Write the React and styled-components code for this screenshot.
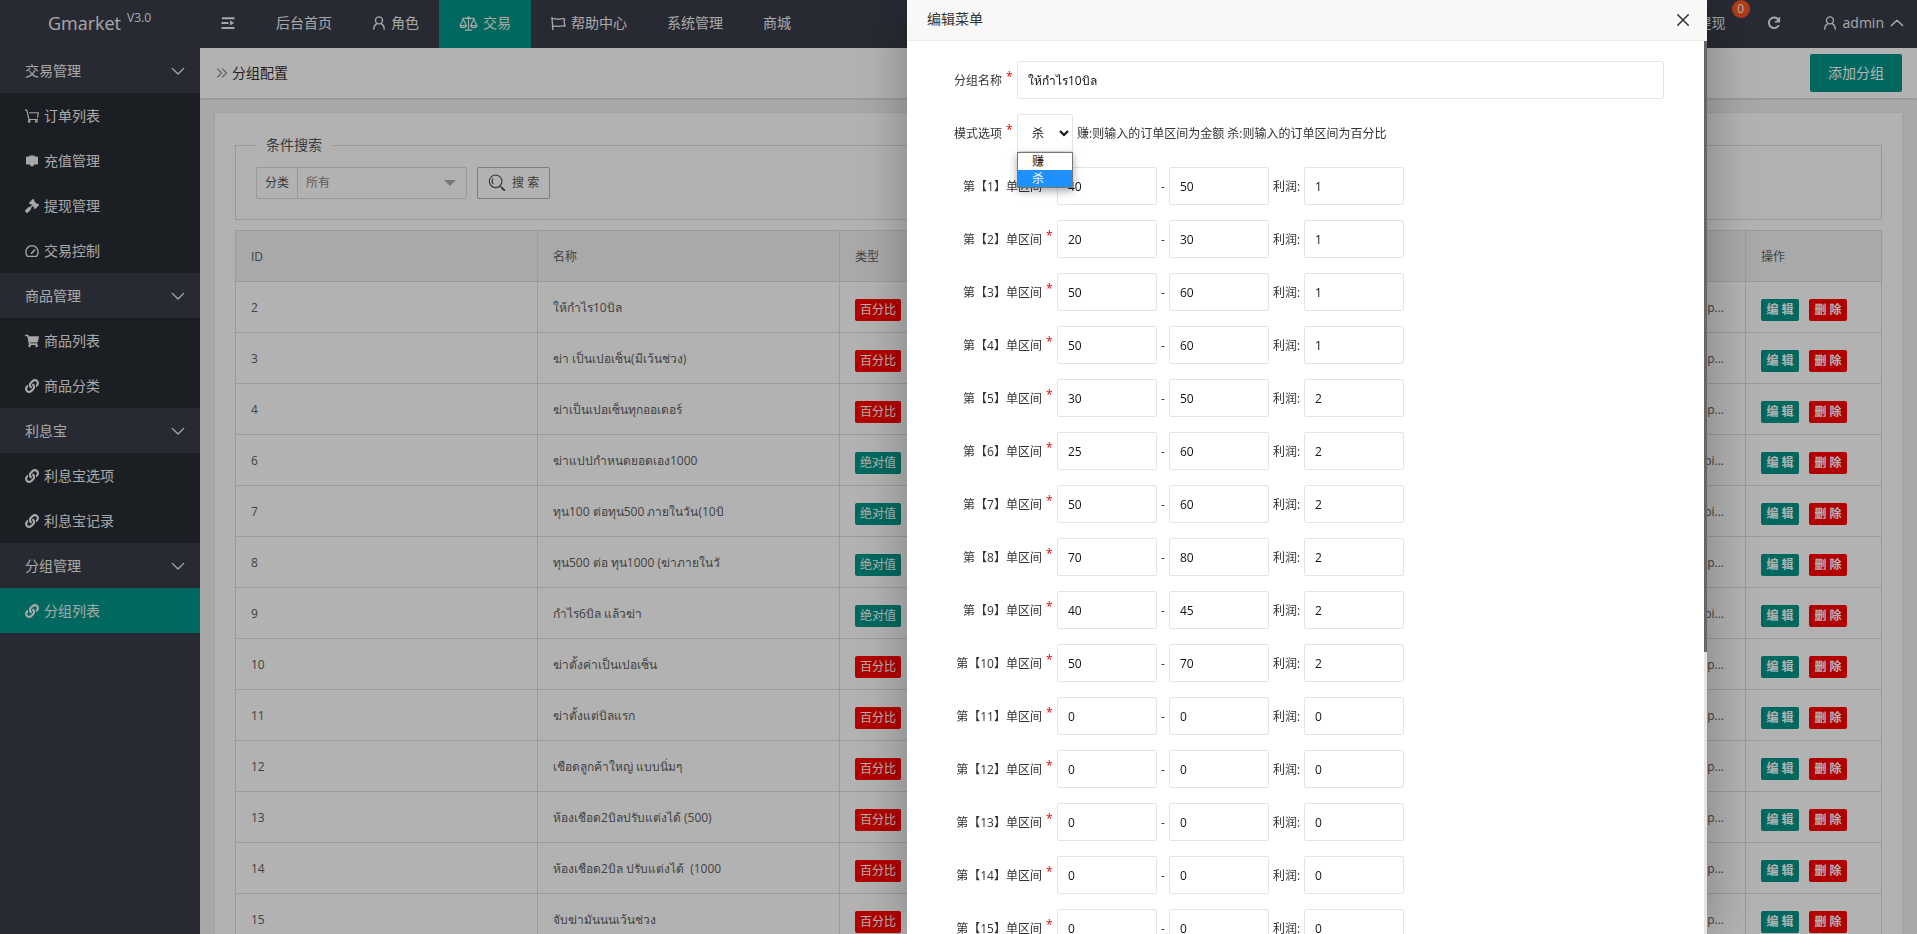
import React from 'react';
import styled, { createGlobalStyle } from 'styled-components';
import { FaGavel, FaLink, FaShoppingCart } from 'react-icons/fa';

const GlobalStyle = createGlobalStyle`
  *, *::before, *::after { box-sizing: border-box; }
  html, body, #root { height: 100%; }
  body {
    margin: 0;
    overflow: hidden;
    background: #f1f1f1;
    color: #333;
    font: 14px/24px "Open Sans", "Noto Sans", "Noto Sans CJK SC", sans-serif;
  }
  button, input, select { font: inherit; color: inherit; }
  a { color: inherit; text-decoration: none; }
  ul { list-style: none; margin: 0; padding: 0; }
  svg { display: block; flex: none; }
`;

/* ---------- icons ---------- */

const Line = ({ size = 14, width = 1.4, children, ...rest }) => (
  <svg width={size} height={size} viewBox="0 0 16 16" fill="none" stroke="currentColor"
    strokeWidth={width} strokeLinecap="round" strokeLinejoin="round" aria-hidden="true" {...rest}>
    {children}
  </svg>
);

const ShrinkIcon = () => (
  <svg width="14" height="14" viewBox="0 0 14 14" fill="currentColor" aria-hidden="true">
    <path d="M1 1.2h12.5v2H1zM.5 6h7v2h-7zM.5 11h13v2H.5zM9 4.4v5.2L13.2 7z" />
  </svg>
);
const UserIcon = () => (
  <Line width={1.6}>
    <circle cx="8" cy="5" r="4" />
    <path d="M5.6 8.600C3.400 9.800 2 12 2 15M10.400 8.600C12.600 9.800 14 12 14 15" />
  </Line>
);
const ScaleIcon = () => (
  <svg width="19" height="15" viewBox="0 0 18 14" fill="none" stroke="currentColor"
    strokeWidth="1.1" strokeLinejoin="round" strokeLinecap="round" aria-hidden="true">
    <path d="M9 .7V13M6 13.300h6M3.600 2.200h10.800M7 2.200L9 .7l2 1.500M4 3L1 9h6zM14 3l-3 6h6zM1 9c.6 2.600 5.400 2.600 6 0M11 9c.6 2.600 5.400 2.600 6 0" />
  </svg>
);
const FlagIcon = () => (
  <Line size={15} width={1.4}>
    <path d="M1 1.500l1 13M1.300 3.200c2.500-1.400 4.500.6 7 .2 2.400-.4 4-1 6.200-.4L14 6.500l1 4.200c-2.500-.8-4.500.2-6.500.4-2.500.2-4-1-6.700 0" />
  </Line>
);
const RefreshIcon = () => (
  <Line width={2.2} strokeLinecap="butt">
    <path d="M13.500 10.500a6 6 0 1 1-.8-6.600" />
    <path d="M14.500 1.500v5h-5z" fill="currentColor" stroke="none" />
    <path d="M14.200 1v5.500H9" strokeWidth="1.600" />
  </Line>
);
const ChevronIcon = ({ up }) => (
  <Line size={14} width={1.6}>
    <path d={up ? 'M1.500 11L8 4.800 14.500 11' : 'M1.500 5L8 11.500 14.500 5'} />
  </Line>
);
const CartIcon = () => (
  <Line width={1.3}>
    <path d="M.7 1L2.200 1.800 4.500 12h9.800M5.200 4.300h10.100L14.300 9.500" />
    <circle cx="4.800" cy="14.200" r="1" /><circle cx="13" cy="14.200" r="1" />
  </Line>
);
const BoardIcon = () => (
  <svg width="14" height="14" viewBox="0 0 14 14" fill="currentColor" aria-hidden="true">
    <path d="M4.500 1.500h5v1H12q1 0 1 1v6q0 1-1 1H9l-.5 1.800h-3L5 10.500H2q-1 0-1-1v-6q0-1 1-1h2.500z" />
  </svg>
);
const GaugeIcon = () => (
  <Line width={1.5}>
    <path d="M3 14.200A7 7.200 0 1 1 13 14.200z" />
    <path d="M7.500 10.500L11 6.800" strokeWidth="1.800" />
  </Line>
);
const DoubleRightIcon = () => (
  <Line size={12} width={1.5}>
    <path d="M2 2.500L7.500 8 2 13.500M8.500 2.500L14 8l-5.500 5.500" />
  </Line>
);
const SearchIcon = () => (
  <Line size={18} width={1}>
    <circle cx="6.800" cy="6.500" r="5.600" />
    <path d="M4.300 4.200c-.9 1.400-.9 3 .1 4.400" />
    <path d="M10.800 10.700l1.200 1" />
    <path d="M12.200 12.200l2.200 2" strokeWidth="1.800" />
  </Line>
);
const CloseIcon = () => (
  <Line size={14} width={1.8}>
    <path d="M2 2l12 12M14 2L2 14" />
  </Line>
);

/* ---------- shell ---------- */

const Shell = styled.div`
  display: grid;
  grid-template: 48px 1fr / 200px 1fr;
  height: 100vh;
  overflow: hidden;
`;

const Logo = styled.div`
  display: flex;
  align-items: center;
  justify-content: center;
  padding-bottom: 2px;
  background: #393d49;
  border-bottom: 1px solid #343843;
  border-right: 1px solid #343843;
  color: #f0f0f0;
  font-size: 18px;
  sup { margin: 0 0 10px 6px; font-size: 12px; line-height: 12px; }
`;

const Header = styled.header`
  display: flex;
  justify-content: space-between;
  background: #393d49;
  color: #f0f0f0;
`;

const NavGroup = styled.nav`
  display: flex;
`;

const NavLink = styled.a`
  display: flex;
  align-items: center;
  gap: 5px;
  height: 48px;
  padding: 0 20px 2px;
  white-space: nowrap;
  background: ${(p) => (p.$active ? '#009688' : 'transparent')};
`;

const AccountLink = styled(NavLink)`
  gap: 6px;
  padding-right: 13px;
  border-left: 1px solid #343843;
`;

const IconButton = styled.button`
  display: grid;
  place-items: center;
  width: 56px;
  padding: 0 0 2px;
  border: 0;
  border-right: ${(p) => (p.$divided ? '1px solid #343843' : '0')};
  background: none;
`;

const BadgedLink = styled(NavLink)`
  position: relative;
`;

const Badge = styled.span`
  position: absolute;
  top: 0;
  right: -4px;
  width: 18px;
  height: 18px;
  border-radius: 9px;
  background: #ff5722;
  color: #fff;
  font-size: 12px;
  line-height: 18px;
  text-align: center;
`;

const Sidebar = styled.aside`
  background: #393d49;
  color: #f0f0f0;
  overflow: hidden;
`;

const GroupTitle = styled.button`
  display: flex;
  align-items: center;
  justify-content: space-between;
  width: 100%;
  height: 45px;
  padding: 0 15px 0 25px;
  border: 0;
  background: #393d49;
`;

const SideItem = styled.a`
  display: flex;
  align-items: center;
  gap: 5px;
  height: 45px;
  padding-left: 25px;
  background: ${(p) => (p.$active ? '#009688' : '#282b33')};
`;

const Main = styled.main`
  display: flex;
  flex-direction: column;
  min-width: 0;
  overflow: hidden;
`;

const TitleBar = styled.div`
  display: flex;
  flex: none;
  align-items: center;
  justify-content: space-between;
  height: 50px;
  padding: 0 15px 0 16px;
  background: #fff;
  box-shadow: 0 1px 2px rgba(0, 0, 0, 0.15);
`;

const PageTitle = styled.h1`
  display: flex;
  align-items: center;
  gap: 4px;
  margin: 0;
  font-size: 14px;
  font-weight: 400;
  svg { color: #888; }
`;

const PrimaryButton = styled.button`
  height: 38px;
  padding: 0 18px;
  border: 0;
  border-radius: 2px;
  background: #009688;
  color: #fff;
`;

const Card = styled.section`
  flex: none;
  margin: 15px;
  padding: 20px;
  background: #fff;
  box-shadow: 0 0 3px rgba(0, 0, 0, 0.08);
`;

/* ---------- search and table ---------- */

const SearchBox = styled.fieldset`
  margin: 0 0 10px;
  padding: 10px 20px 20px;
  border: 1px solid #dcdcdc;
  legend { padding: 0 10px; color: #555; }
`;

const SearchForm = styled.form`
  display: flex;
  gap: 10px;
  font-size: 12px;
`;

const Field = styled.label`
  display: flex;
  align-items: center;
  height: 32px;
  border: 1px solid #dcdcdc;
  border-radius: 2px;
  color: #555;
  span { padding: 0 8px; border-right: 1px solid #dcdcdc; line-height: 30px; }
`;

const SelectWrap = styled.div`
  display: flex;
  align-items: center;
  padding-right: 10px;
  select {
    appearance: none;
    width: 158px;
    margin-right: -12px;
    padding: 0 8px;
    border: 0;
    background: none;
    color: #888;
  }
  svg { pointer-events: none; color: #aaa; }
`;

const SearchButton = styled.button`
  display: flex;
  align-items: center;
  gap: 6px;
  height: 32px;
  padding: 0 10px;
  border: 1px solid #b4b4b4;
  border-radius: 2px;
  background: #fff;
  color: #555;
  white-space: pre;
`;

const Table = styled.table`
  width: 100%;
  table-layout: fixed;
  border-collapse: collapse;
  color: #606060;
  font-size: 12px;
  th, td {
    height: 51px;
    padding: 2px 15px 0;
    border: 1px solid #dedede;
    font-weight: 400;
    text-align: left;
    white-space: pre;
  }
  th { background: #f2f2f2; }
  th:last-child { width: 136px; }
`;

const RuleCell = styled.td`
  && { padding-right: 21px; text-align: right; }
`;

const Tag = styled.span`
  display: inline-block;
  height: 22px;
  margin-top: 4px;
  padding: 0 5px;
  border-radius: 2px;
  background: ${(p) => (p.$red ? '#ff0000' : '#009688')};
  color: #fff;
  line-height: 22px;
`;

const Actions = styled.div`
  display: flex;
  gap: 10px;
  margin-top: 4px;
`;

const SmallButton = styled.button`
  width: 38px;
  height: 22px;
  padding: 0;
  border: 0;
  border-radius: 2px;
  background: ${(p) => (p.$red ? '#ff0000' : '#009688')};
  color: #fff;
  line-height: 22px;
  font-weight: 700;
  white-space: pre;
`;

/* ---------- dialog ---------- */

const Overlay = styled.div`
  position: fixed;
  inset: 0;
  display: flex;
  justify-content: flex-end;
  padding-right: 210px;
  background: rgba(0, 0, 0, 0.3);
`;

const Dialog = styled.section`
  display: flex;
  flex-direction: column;
  width: 800px;
  height: 100%;
  background: #fff;
  box-shadow: 1px 1px 50px rgba(0, 0, 0, 0.3);
`;

const DialogHead = styled.header`
  display: flex;
  flex: none;
  align-items: center;
  justify-content: space-between;
  height: 41px;
  padding: 0 17px 0 20px;
  border-bottom: 1px solid #eee;
  background: #f8f8f8;
  h2 { margin: 0 0 2px; font-size: 14px; font-weight: 400; }
  button { padding: 0; border: 0; background: none; }
`;

const DialogBody = styled.div`
  display: flex;
  flex: 1;
  min-height: 0;
`;

const EditForm = styled.form`
  display: flex;
  flex: 1;
  flex-direction: column;
  gap: 15px;
  padding: 20px 40px 20px 0;
  overflow: hidden;
  font-size: 12px;
`;

const ScrollTrack = styled.div`
  width: 3px;
  background: #e4e4e4;
`;

const ScrollThumb = styled.div`
  height: 68.4%;
  background: #666;
`;

const Row = styled.div`
  display: flex;
  flex: none;
  align-items: center;
  gap: 4px;
`;

const Note = styled.label`
  padding-top: 2px;
`;

const RowLabel = styled.label`
  display: flex;
  justify-content: flex-end;
  width: ${(p) => (p.$wide ? '146px' : '106px')};
  padding: 2px 1px 0 0;
  white-space: nowrap;
  &::after {
    content: '*';
    width: 6px;
    height: 24px;
    margin-left: 4px;
    line-height: 16px;
    color: #e60000;
  }
`;

const TextInput = styled.input`
  flex: ${(p) => (p.$grow ? '1' : 'none')};
  width: 100px;
  height: 38px;
  padding: 0 10px;
  border: 1px solid #e4e4e4;
  border-radius: 2px;
  background: #fff;
  color: #111;
`;

const ModePicker = styled.div`
  position: relative;
  select {
    display: block;
    width: 56px;
    height: 38px;
    padding-left: 10px;
    border: 1px solid #e4e4e4;
    border-radius: 2px;
    background: #fff;
    color: #111;
  }
`;

const OptionList = styled.ul`
  position: absolute;
  top: 38px;
  left: 0;
  width: 56px;
  border: 1px solid #777;
  background: #fff;
  box-shadow: 0 3px 8px rgba(0, 0, 0, 0.35);
`;

const Option = styled.li`
  height: 17px;
  padding-left: 14px;
  background: ${(p) => (p.$selected ? '#1e90ff' : '#fff')};
  color: ${(p) => (p.$selected ? '#fff' : '#111')};
  line-height: 17px;
`;

/* ---------- data ---------- */

const MENU = [
  ['交易管理', [['订单列表', CartIcon], ['充值管理', BoardIcon], ['提现管理', FaGavel], ['交易控制', GaugeIcon]]],
  ['商品管理', [['商品列表', FaShoppingCart], ['商品分类', FaLink]]],
  ['利息宝', [['利息宝选项', FaLink], ['利息宝记录', FaLink]]],
  ['分组管理', [['分组列表', FaLink]]],
];

const NAV = [
  ['后台首页'], ['角色', UserIcon], ['交易', ScaleIcon], ['帮助中心', FlagIcon], ['系统管理'], ['商城'],
];

const GROUPS = [
  [2, 'ให้กำไร10บิล', true, 'p...'],
  [3, 'ฆ่า เป็นเปอเซ็น(มีเว้นช่วง)', true, 'p...'],
  [4, 'ฆ่าเป็นเปอเซ็นทุกออเดอร์', true, 'p...'],
  [6, 'ฆ่าแปปกำหนดยอดเอง1000', false, 'pi...'],
  [7, 'ทุน100 ต่อทุน500 ภายในวัน(10บิ', false, 'pi...'],
  [8, 'ทุน500 ต่อ ทุน1000 (ฆ่าภายในวั', false, '"p...'],
  [9, 'กำไร6บิล แล้วฆ่า', false, 'pi...'],
  [10, 'ฆ่าตั้งค่าเป็นเปอเซ็น', true, 'p...'],
  [11, 'ฆ่าตั้งแต่บิลแรก', true, 'p...'],
  [12, 'เชือดลูกค้าใหญ่ แบบนิ่มๆ', true, 'p...'],
  [13, 'ห้องเชือด2บิลปรับแต่งได้ (500)', true, 'p...'],
  [14, 'ห้องเชือด2บิล ปรับแต่งได้  (1000', true, 'p...'],
  [15, 'จับฆ่ามันนนเว้นช่วง', true, 'p...'],
];

const RANGES = [
  [40, 50, 1], [20, 30, 1], [50, 60, 1], [50, 60, 1], [30, 50, 2],
  [25, 60, 2], [50, 60, 2], [70, 80, 2], [40, 45, 2], [50, 70, 2],
  [0, 0, 0], [0, 0, 0], [0, 0, 0], [0, 0, 0], [0, 0, 0],
];

/* ---------- parts ---------- */

function TopBar() {
  return (
    <Header>
      <NavGroup>
        <IconButton $divided aria-label="menu"><ShrinkIcon /></IconButton>
        {NAV.map(([text, Icon]) => (
          <NavLink key={text} href="#" $active={text === '交易'}>
            {Icon && <Icon />}{text}
          </NavLink>
        ))}
      </NavGroup>
      <NavGroup>
        <BadgedLink href="#">提现<Badge>0</Badge></BadgedLink>
        <IconButton aria-label="refresh"><RefreshIcon /></IconButton>
        <AccountLink href="#"><UserIcon />admin<ChevronIcon up /></AccountLink>
      </NavGroup>
    </Header>
  );
}

function SideMenu() {
  return (
    <Sidebar>
      {MENU.map(([title, items]) => (
        <div key={title}>
          <GroupTitle>{title}<ChevronIcon /></GroupTitle>
          {items.map(([text, Icon]) => (
            <SideItem key={text} href="#" $active={text === '分组列表'}><Icon size={14} />{text}</SideItem>
          ))}
        </div>
      ))}
    </Sidebar>
  );
}

function GroupTable() {
  return (
    <Table>
      <thead>
        <tr><th>ID</th><th>名称</th><th>类型</th><th /><th /><th>操作</th></tr>
      </thead>
      <tbody>
        {GROUPS.map(([id, name, percent, rule]) => (
          <tr key={id}>
            <td>{id}</td>
            <td>{name}</td>
            <td><Tag $red={percent}>{percent ? '百分比' : '绝对值'}</Tag></td>
            <td />
            <RuleCell>{rule}</RuleCell>
            <td>
              <Actions>
                <SmallButton>编 辑</SmallButton>
                <SmallButton $red>删 除</SmallButton>
              </Actions>
            </td>
          </tr>
        ))}
      </tbody>
    </Table>
  );
}

function EditDialog() {
  return (
    <Overlay>
      <Dialog role="dialog" aria-labelledby="dialog-title">
        <DialogHead>
          <h2 id="dialog-title">编辑菜单</h2>
          <button aria-label="close"><CloseIcon /></button>
        </DialogHead>
        <DialogBody>
          <EditForm>
            <Row>
              <RowLabel htmlFor="name">分组名称</RowLabel>
              <TextInput id="name" $grow defaultValue="ให้กำไร10บิล" />
            </Row>
            <Row>
              <RowLabel htmlFor="mode">模式选项</RowLabel>
              <ModePicker>
                <select id="mode" defaultValue="杀">
                  <option>赚</option>
                  <option>杀</option>
                </select>
                <OptionList role="listbox">
                  <Option role="option">赚</Option>
                  <Option role="option" $selected>杀</Option>
                </OptionList>
              </ModePicker>
              <Note as="span">赚:则输入的订单区间为金额 杀:则输入的订单区间为百分比</Note>
            </Row>
            {RANGES.map(([from, to, profit], i) => (
              <Row key={i}>
                <RowLabel $wide htmlFor={`from-${i}`}>第【{i + 1}】单区间</RowLabel>
                <TextInput id={`from-${i}`} defaultValue={from} />
                <Note htmlFor={`to-${i}`}>-</Note>
                <TextInput id={`to-${i}`} defaultValue={to} />
                <Note htmlFor={`profit-${i}`}>利润:</Note>
                <TextInput id={`profit-${i}`} defaultValue={profit} />
              </Row>
            ))}
          </EditForm>
          <ScrollTrack><ScrollThumb /></ScrollTrack>
        </DialogBody>
      </Dialog>
    </Overlay>
  );
}

export default function App() {
  return (
    <>
      <GlobalStyle />
      <Shell>
        <Logo>Gmarket<sup>V3.0</sup></Logo>
        <TopBar />
        <SideMenu />
        <Main>
          <TitleBar>
            <PageTitle><DoubleRightIcon />分组配置</PageTitle>
            <PrimaryButton>添加分组</PrimaryButton>
          </TitleBar>
          <Card>
            <SearchBox>
              <legend>条件搜索</legend>
              <SearchForm>
                <Field>
                  <span>分类</span>
                  <SelectWrap>
                    <select defaultValue="所有"><option>所有</option></select>
                    <svg width="12" height="6" viewBox="0 0 12 6" fill="currentColor" aria-hidden="true"><path d="M0 0h12L6 6z" /></svg>
                  </SelectWrap>
                </Field>
                <SearchButton type="button"><SearchIcon />搜 索</SearchButton>
              </SearchForm>
            </SearchBox>
            <GroupTable />
          </Card>
        </Main>
      </Shell>
      <EditDialog />
    </>
  );
}
